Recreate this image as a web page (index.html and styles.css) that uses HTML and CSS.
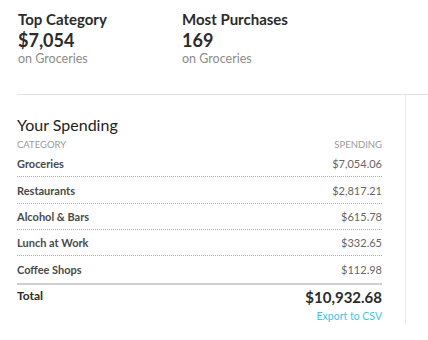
FILE: index.html
```html
<!DOCTYPE html>
<html>
<head>
<meta charset="utf-8">
<link rel="stylesheet" href="styles.css">
</head>
<body>
<div class="summary">
  <div class="stat">
    <div class="stat-title">Top Category</div>
    <div class="stat-value">$7,054</div>
    <div class="stat-sub">on Groceries</div>
  </div>
  <div class="stat">
    <div class="stat-title">Most Purchases</div>
    <div class="stat-value">169</div>
    <div class="stat-sub">on Groceries</div>
  </div>
</div>
<div class="panel">
  <div class="spending">
    <h2 class="heading">Your Spending</h2>
    <div class="head-row">
      <span>CATEGORY</span>
      <span>SPENDING</span>
    </div>
    <div class="row"><span class="cat">Groceries</span><span class="amt">$7,054.06</span></div>
    <div class="row tall"><span class="cat">Restaurants</span><span class="amt">$2,817.21</span></div>
    <div class="row"><span class="cat">Alcohol &amp; Bars</span><span class="amt">$615.78</span></div>
    <div class="row"><span class="cat">Lunch at Work</span><span class="amt">$332.65</span></div>
    <div class="row last"><span class="cat">Coffee Shops</span><span class="amt">$112.98</span></div>
    <div class="total-row">
      <span class="total-label">Total</span>
      <span class="total-amt">$10,932.68</span>
    </div>
    <div class="export"><a class="export-link">Export to CSV</a></div>
  </div>
</div>
</body>
</html>
```

FILE: styles.css
```css
html, body {
  margin: 0;
  padding: 0;
  background: #fff;
}
body {
  font-family: Lato, "Noto Sans", sans-serif;
  color: #333;
}
.summary {
  display: flex;
  padding: 9px 0 0 18px;
  height: 94px;
  box-sizing: border-box;
}
.stat {
  width: 164px;
}
.stat-title {
  font-size: 15px;
  font-weight: 700;
  line-height: 20px;
  color: #2b2b2b;
}
.stat-value {
  font-size: 18px;
  font-weight: 700;
  line-height: 22px;
  color: #2b2b2b;
}
.stat-sub {
  font-size: 12.5px;
  line-height: 16px;
  color: #8c8c8c;
}
.panel {
  margin-left: 17px;
  border-top: 1px solid #e2e2e2;
}
.spending {
  width: 365px;
  padding: 20px 23px 0 0;
  height: 209px;
  border-right: 1px solid #ebebeb;
}
.heading {
  margin: 0;
  font-size: 16px;
  font-weight: 400;
  line-height: 20px;
  color: #222;
}
.head-row {
  display: flex;
  justify-content: space-between;
  font-size: 9.5px;
  color: #9a9a9a;
  line-height: 12px;
  margin-top: 4px;
}
.row {
  display: flex;
  justify-content: space-between;
  align-items: center;
  height: 26px;
  border-bottom: 1px dotted #aaa;
  box-sizing: border-box;
  font-size: 11px;
}
.row.tall {
  height: 27px;
}
.row.last {
  border-bottom: 2px solid #d0d0d0;
  height: 29px;
}
.cat {
  font-weight: 700;
  color: #4a4a4a;
}
.amt {
  color: #666;
}
.total-row {
  display: flex;
  justify-content: space-between;
  align-items: center;
  height: 24px;
}
.total-label {
  font-size: 12px;
  font-weight: 700;
  color: #2b2b2b;
  padding-bottom: 4px;
}
.total-amt {
  font-size: 15px;
  font-weight: 700;
  color: #2b2b2b;
}
.export {
  text-align: right;
  font-size: 10.5px;
  line-height: 14px;
}
.export-link {
  color: #3cc6ec;
}
```
